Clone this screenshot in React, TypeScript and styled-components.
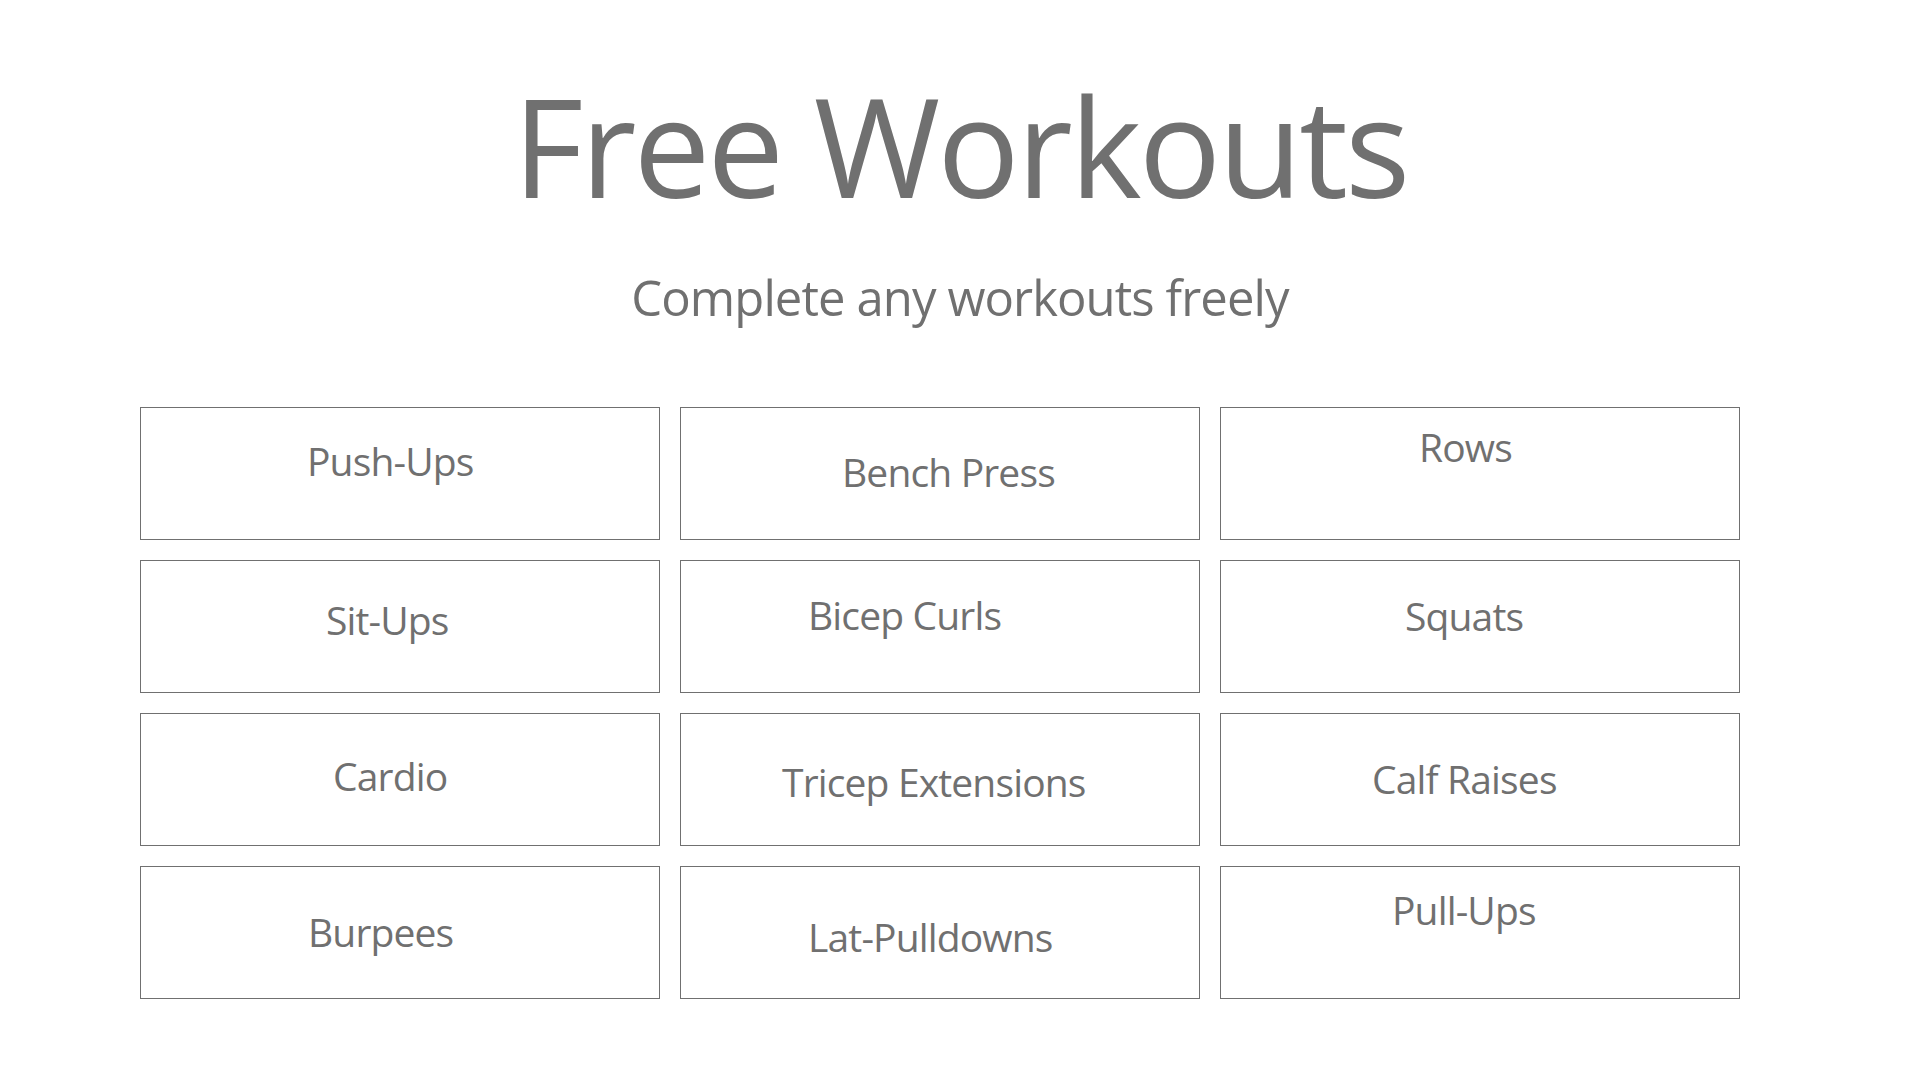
import * as React from "react";
import styled, { createGlobalStyle } from "styled-components";

const GlobalStyle = createGlobalStyle`
  html, body {
    margin: 0;
    padding: 0;
    background: #ffffff;
  }
  body {
    font-family: "Open Sans", "Noto Sans", "Liberation Sans", sans-serif;
    color: #707070;
  }
`;

const Page = styled.main`
  width: 1920px;
  min-height: 1080px;
  display: flex;
  flex-direction: column;
  align-items: center;
  padding-top: 77px;
  box-sizing: border-box;
`;

const Title = styled.h1`
  margin: 0;
  font-size: 137px;
  font-weight: 400;
  line-height: 1;
  letter-spacing: -3px;
  color: #707070;
`;

const Subtitle = styled.p`
  margin: 59px 0 0;
  font-size: 49px;
  font-weight: 400;
  line-height: 1;
  letter-spacing: -0.9px;
  color: #707070;
`;

const Grid = styled.section`
  align-self: flex-start;
  margin: 85px 0 0 140px;
  display: grid;
  grid-template-columns: repeat(3, 520px);
  grid-auto-rows: 133px;
  gap: 20px;
`;

const Card = styled.div<{ $left: number; $top: number }>`
  box-sizing: border-box;
  border: 1px solid #707070;
  background: #ffffff;
  display: flex;
  align-items: flex-start;
  padding: ${(p) => p.$top}px 0 0 ${(p) => p.$left}px;
  cursor: pointer;
`;

const CardLabel = styled.span`
  font-size: 39px;
  line-height: 1;
  letter-spacing: -0.85px;
  white-space: nowrap;
  color: #707070;
`;

// text offsets inside each box, as they sit in the design
const workouts = [
  { name: "Push-Ups", left: 166, top: 33 },
  { name: "Bench Press", left: 161, top: 44 },
  { name: "Rows", left: 198, top: 19 },
  { name: "Sit-Ups", left: 185, top: 39 },
  { name: "Bicep Curls", left: 127, top: 34 },
  { name: "Squats", left: 184, top: 35 },
  { name: "Cardio", left: 192, top: 42 },
  { name: "Tricep Extensions", left: 101, top: 48 },
  { name: "Calf Raises", left: 151, top: 45 },
  { name: "Burpees", left: 167, top: 45 },
  { name: "Lat-Pulldowns", left: 127, top: 50 },
  { name: "Pull-Ups", left: 171, top: 23 },
];

export default function App() {
  return (
    <>
      <GlobalStyle />
      <Page>
        <Title>Free Workouts</Title>
        <Subtitle>Complete any workouts freely</Subtitle>
        <Grid>
          {workouts.map((w) => (
            <Card key={w.name} $left={w.left} $top={w.top}>
              <CardLabel>{w.name}</CardLabel>
            </Card>
          ))}
        </Grid>
      </Page>
    </>
  );
}
